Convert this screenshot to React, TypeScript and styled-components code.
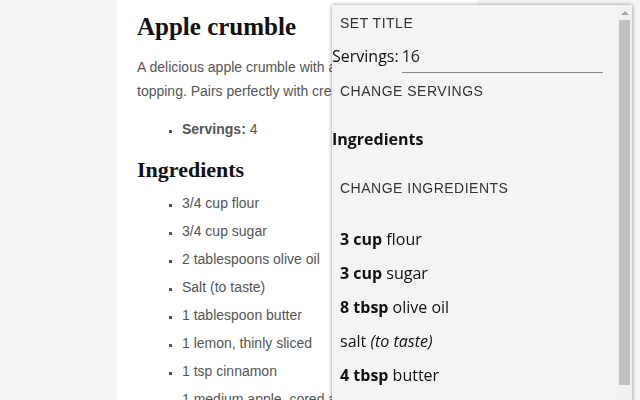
import React from "react";
import styled, { createGlobalStyle } from "styled-components";

const Global = createGlobalStyle`
  html, body { margin: 0; padding: 0; background: #f5f6f3; overflow: hidden; }
  body { font-family: "Liberation Sans", Arial, sans-serif; }
`;

const Page = styled.div`
  display: flex;
  padding-left: 117px;
  height: 400px;
`;

const Main = styled.main`
  width: 320px;
  background: #ffffff;
  padding: 0 20px;
`;

const Title = styled.h1`
  font-family: "Liberation Serif", "Times New Roman", serif;
  font-size: 25px;
  font-weight: bold;
  margin: 12px 0 0;
  line-height: 30px;
  color: #111;
`;

const Desc = styled.p`
  margin: 13px 0 0;
  font-size: 14px;
  line-height: 24px;
  color: #555;
`;

const List = styled.ul<{ $mt: number }>`
  list-style: square;
  margin: ${(p) => p.$mt}px 0 0;
  padding-left: 45px;
  font-size: 14px;
  color: #555;
  li { line-height: 18px; margin-bottom: 10px; }
  li::marker { font-size: 11px; }
  b { color: #555; }
`;

const SubTitle = styled.h2`
  font-family: "Liberation Serif", "Times New Roman", serif;
  font-size: 22px;
  font-weight: bold;
  margin: 19px 0 0;
  line-height: 26px;
  color: #111;
`;

const Panel = styled.aside`
  position: fixed;
  top: 5px;
  left: 332px;
  width: 300px;
  height: 420px;
  display: flex;
  background: #f4f4f4;
  box-shadow: 0 0 4px rgba(0, 0, 0, 0.45);
  font-family: "Open Sans", "Noto Sans", sans-serif;
  color: #111;
`;

const PanelBody = styled.div`
  flex: 1;
  overflow: hidden;
`;

const ScrollTrack = styled.div`
  width: 15px;
  background: #f1f1f1;
  display: flex;
  flex-direction: column;
  align-items: center;
`;

const ScrollArrow = styled.div`
  margin-top: 6px;
  width: 0;
  height: 0;
  border-left: 4px solid transparent;
  border-right: 4px solid transparent;
  border-bottom: 4px solid #a3a3a3;
`;

const ScrollThumb = styled.div`
  margin-top: 5px;
  width: 11px;
  height: 365px;
  background: #c1c1c1;
`;

const Button = styled.button<{ $mt?: number }>`
  display: block;
  background: none;
  border: none;
  padding: 0 8px;
  margin-top: ${(p) => p.$mt ?? 0}px;
  height: 36px;
  font-family: "Liberation Sans", Arial, sans-serif;
  font-size: 14px;
  letter-spacing: 0.5px;
  text-transform: uppercase;
  color: #333;
  cursor: pointer;
`;

const Field = styled.label`
  display: flex;
  align-items: flex-start;
  margin-top: 4px;
  font-size: 16px;
  line-height: 22px;
`;

const Input = styled.input`
  width: 201px;
  margin: 0 0 0 3px;
  border: none;
  border-bottom: 1px solid #888;
  background: transparent;
  font-family: inherit;
  font-size: 16px;
  line-height: 22px;
  height: 22px;
  padding: 0 0 5px;
  box-sizing: content-box;
  color: #222;
  outline: none;
`;

const PanelHeading = styled.h3`
  margin: 19px 0 0;
  font-size: 16px;
  font-weight: bold;
  line-height: 22px;
`;

const IngredientList = styled.div`
  margin-top: 16px;
`;

const Ingredient = styled.div`
  padding: 0 8px;
  height: 34px;
  line-height: 34px;
  font-size: 16px;
`;

const ingredients: [string | null, string, string | null][] = [
  ["3 cup", "flour", null],
  ["3 cup", "sugar", null],
  ["8 tbsp", "olive oil", null],
  [null, "salt", "(to taste)"],
  ["4 tbsp", "butter", null],
  ["1", "lemon", null],
  ["1 tsp", "cinnamon", null],
];

export default function App() {
  return (
    <>
      <Global />
      <Page>
        <Main>
          <Title>Apple crumble</Title>
          <Desc>
            A delicious apple crumble with a crunchy cinnamon topping. Pairs perfectly with cream or ice cream.
          </Desc>
          <List $mt={17}>
            <li>
              <b>Servings:</b> 4
            </li>
          </List>
          <SubTitle>Ingredients</SubTitle>
          <List $mt={11}>
            <li>3/4 cup flour</li>
            <li>3/4 cup sugar</li>
            <li>2 tablespoons olive oil</li>
            <li>Salt (to taste)</li>
            <li>1 tablespoon butter</li>
            <li>1 lemon, thinly sliced</li>
            <li>1 tsp cinnamon</li>
            <li>1 medium apple, cored and sliced</li>
          </List>
        </Main>
      </Page>
      <Panel>
        <PanelBody>
          <Button>Set title</Button>
          <Field>
            Servings:<Input defaultValue="16" />
          </Field>
          <Button>Change servings</Button>
          <PanelHeading>Ingredients</PanelHeading>
          <Button $mt={20}>Change ingredients</Button>
          <IngredientList>
            {ingredients.map(([q, n, note], i) => (
              <Ingredient key={i}>
                {q && <b>{q} </b>}
                {n}
                {note && (
                  <>
                    {" "}
                    <i>{note}</i>
                  </>
                )}
              </Ingredient>
            ))}
          </IngredientList>
        </PanelBody>
        <ScrollTrack>
          <ScrollArrow />
          <ScrollThumb />
        </ScrollTrack>
      </Panel>
    </>
  );
}
